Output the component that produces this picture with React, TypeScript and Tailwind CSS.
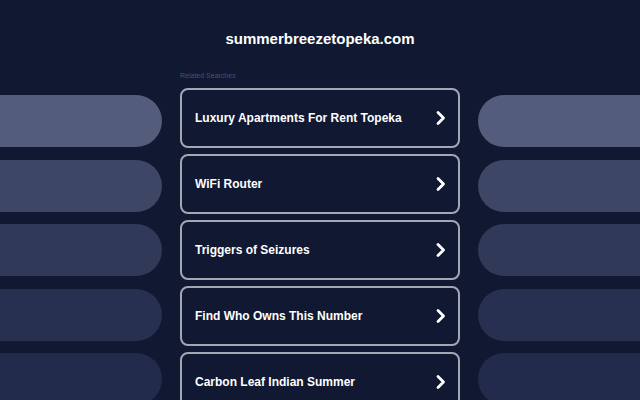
import React from 'react';

const searches = [
    'Luxury Apartments For Rent Topeka',
    'WiFi Router',
    'Triggers of Seizures',
    'Find Who Owns This Number',
    'Carbon Leaf Indian Summer',
];

const barColors = ['bg-[#535c7b]', 'bg-[#3e4665]', 'bg-[#313959]', 'bg-[#283051]', 'bg-[#232b4c]'];

const Chevron = () => (
    <svg width="14" height="16" viewBox="0 0 14 16" fill="none" stroke="white" strokeWidth={2.8} strokeLinecap="round" strokeLinejoin="round">
        <path d="M4 2.5l5.5 5.5-5.5 5.5" />
    </svg>
);

const Bars = ({ side }: { side: 'left' | 'right' }) => (
    <div className="flex flex-col gap-[12.5px] pt-[95px]">
        {barColors.map((c, i) => (
            <div key={i} className={`h-[52px] shrink-0 ${c} ${side === 'left' ? 'rounded-r-full' : 'rounded-l-full'}`} />
        ))}
    </div>
);

export default function App() {
    return (
        <div className="w-[640px] h-[400px] overflow-hidden bg-[#111831] flex" style={{ fontFamily: '"Liberation Sans", Arial, sans-serif' }}>
            <div className="w-[162px] shrink-0">
                <Bars side="left" />
            </div>
            <div className="w-[280px] shrink-0 mx-[18px] flex flex-col">
                <h1 className="mt-[30px] text-center text-white font-bold text-[15px] leading-[18px]">summerbreezetopeka.com</h1>
                <div className="mt-[24px] text-[7px] leading-[8px] text-[#4a5270]">Related Searches</div>
                <div className="mt-[8px] flex flex-col gap-[6px]">
                    {searches.map((s) => (
                        <div key={s} className="h-[60px] shrink-0 rounded-lg border-2 border-[#a3a7b3] flex items-center justify-between pl-[13px] pr-[10px]">
                            <span className="text-white font-bold text-[12px]">{s}</span>
                            <Chevron />
                        </div>
                    ))}
                </div>
            </div>
            <div className="flex-1">
                <Bars side="right" />
            </div>
        </div>
    );
}
